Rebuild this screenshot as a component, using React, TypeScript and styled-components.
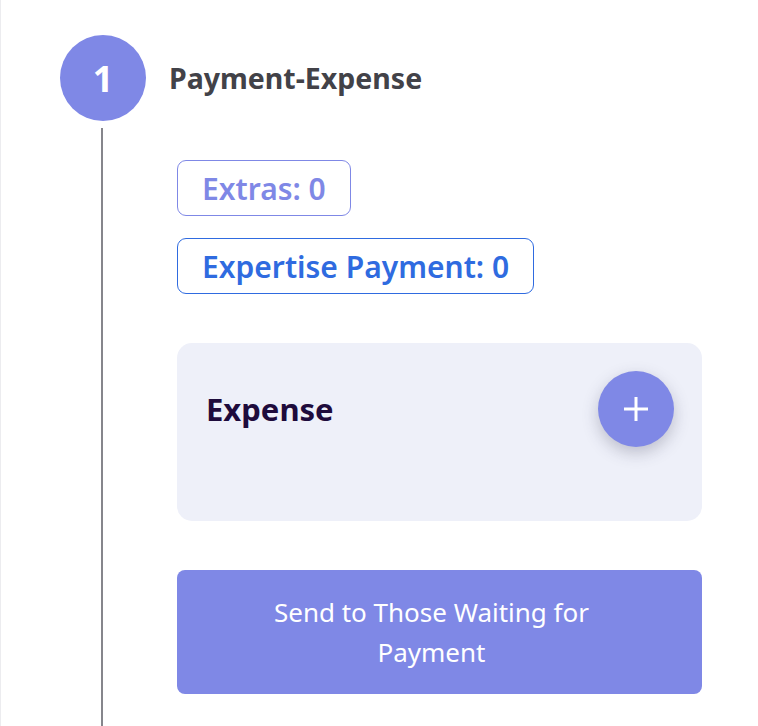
import styled, { createGlobalStyle } from 'styled-components';

const GlobalStyle = createGlobalStyle`
  html, body {
    margin: 0;
    padding: 0;
    background: #fff;
  }
  body {
    font-family: "Noto Sans", "Open Sans", sans-serif;
  }
`;

const Page = styled.div`
  height: 726px;
  border-left: 1px solid #ececef;
  padding: 35px 0 0 59px;
  box-sizing: border-box;
  overflow: hidden;
`;

const StepHeader = styled.div`
  display: flex;
  align-items: center;
  gap: 23px;
`;

const StepCircle = styled.div`
  width: 86px;
  height: 86px;
  border-radius: 50%;
  background: #7f88e6;
  color: #fff;
  display: flex;
  align-items: center;
  justify-content: center;
  font-size: 36px;
  font-weight: 700;
  flex-shrink: 0;
`;

const StepTitle = styled.h2`
  margin: 0;
  font-size: 28.5px;
  font-weight: 700;
  color: #424248;
`;

const StepBody = styled.div`
  margin-left: 41px;
  margin-top: 7px;
  border-left: 2px solid #86868c;
  padding: 32px 0 40px 74px;
  width: 525px;
  display: flex;
  flex-direction: column;
  align-items: flex-start;
`;

const Chip = styled.div<{ $color: string }>`
  border: 1.6px solid ${p => p.$color};
  color: ${p => p.$color};
  border-radius: 9px;
  padding: 0 24px;
  height: 56px;
  box-sizing: border-box;
  display: flex;
  align-items: center;
  font-size: 30px;
  font-weight: 600;
  margin-bottom: 22px;
`;

const ExpenseCard = styled.div`
  margin-top: 27px;
  width: 525px;
  height: 178px;
  box-sizing: border-box;
  background: #eef0f9;
  border-radius: 15px;
  padding: 28px 28px 0 29px;
  display: flex;
  justify-content: space-between;
  align-items: flex-start;
`;

const CardTitle = styled.h3`
  margin: 17px 0 0;
  font-size: 31px;
  font-weight: 700;
  color: #1e0b3c;
`;

const AddButton = styled.button`
  width: 76px;
  height: 76px;
  border-radius: 50%;
  border: none;
  background: #7f88e6;
  box-shadow: 0 6px 16px rgba(60, 60, 90, 0.28);
  display: flex;
  align-items: center;
  justify-content: center;
  padding: 0;
  cursor: pointer;
`;

const SendButton = styled.button`
  margin-top: 49px;
  width: 525px;
  height: 124px;
  border: none;
  border-radius: 8px;
  background: #7f88e6;
  color: #fff;
  font-family: inherit;
  font-size: 26px;
  line-height: 40px;
  padding: 0 96px 0 80px;
  cursor: pointer;
`;

export default function App() {
  return (
    <>
      <GlobalStyle />
      <Page>
        <StepHeader>
          <StepCircle>1</StepCircle>
          <StepTitle>Payment-Expense</StepTitle>
        </StepHeader>
        <StepBody>
          <Chip $color="#7f88e6">Extras: 0</Chip>
          <Chip $color="#2f6be0">Expertise Payment: 0</Chip>
          <ExpenseCard>
            <CardTitle>Expense</CardTitle>
            <AddButton aria-label="Add expense">
              <svg width="28" height="28" viewBox="0 0 28 28">
                <path d="M14 2v24M2 14h24" stroke="#fff" strokeWidth="3" />
              </svg>
            </AddButton>
          </ExpenseCard>
          <SendButton>Send to Those Waiting for Payment</SendButton>
        </StepBody>
      </Page>
    </>
  );
}
